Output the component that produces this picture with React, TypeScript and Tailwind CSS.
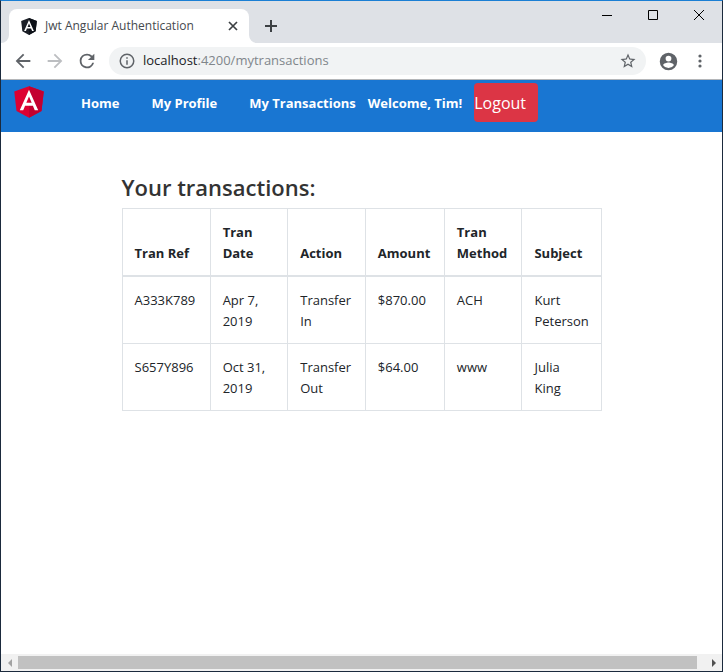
import type { ReactNode } from 'react';

type Transaction = {
  ref: string;
  date: string;
  action: string;
  amount: string;
  method: string;
  subject: string;
};

const transactions: Transaction[] = [
  { ref: 'A333K789', date: 'Apr 7, 2019', action: 'Transfer In', amount: '$870.00', method: 'ACH', subject: 'Kurt Peterson' },
  { ref: 'S657Y896', date: 'Oct 31, 2019', action: 'Transfer Out', amount: '$64.00', method: 'www', subject: 'Julia King' },
];

const headings = ['Tran Ref', 'Tran Date', 'Action', 'Amount', 'Tran Method', 'Subject'];

function AngularLogo({ className, left, right }: { className: string; left: string; right: string }) {
  return (
    <svg viewBox="31 29 188 202" className={className} aria-hidden="true">
      <path fill={left} d="M125 30 31.9 63.2l14.2 123.1L125 230l78.9-43.7 14.2-123.1z" />
      <path fill={right} d="M125 30v200l78.9-43.7 14.2-123.1z" />
      <path
        fill="#fff"
        d="M125 52.1 66.8 182.6h21.7l11.7-29.2h49.4l11.7 29.2H183L125 52.1zm17 83.3h-34l17-40.9z"
      />
    </svg>
  );
}

function IconButton({ label, className, children }: { label: string; className: string; children: ReactNode }) {
  return (
    <button type="button" aria-label={label} className={`flex shrink-0 items-center justify-center ${className}`}>
      {children}
    </button>
  );
}

function TabStrip() {
  return (
    <header className="flex h-[42px] bg-[#dee1e6]">
      <div className="flex w-2 items-end bg-[#dee1e6]">
        <svg viewBox="0 0 8 8" className="size-2" aria-hidden="true">
          <path fill="#fff" d="M0 8a8 8 0 0 0 8-8v8z" />
        </svg>
      </div>
      <div className="mt-2 flex w-60 items-center rounded-t-lg bg-white pr-2 pl-3">
        <AngularLogo className="h-[17px] w-4 shrink-0" left="#1b1f27" right="#0d1118" />
        <span className="ml-2 flex-1 text-[12px] whitespace-nowrap text-[#45494e]">Jwt Angular Authentication</span>
        <IconButton label="Close tab" className="size-4">
          <svg viewBox="0 0 16 16" className="size-4" aria-hidden="true">
            <path d="m4 4 8 8m0-8-8 8" stroke="#3c4043" strokeWidth="1.7" />
          </svg>
        </IconButton>
      </div>
      <svg viewBox="0 0 8 8" className="size-2 self-end" aria-hidden="true">
        <path fill="#fff" d="M8 8a8 8 0 0 1-8-8v8z" />
      </svg>
      <IconButton label="New tab" className="mt-[13px] ml-[2px] size-6">
        <svg viewBox="0 0 14 14" className="size-[14px]" aria-hidden="true">
          <path d="M7 1v12M1 7h12" stroke="#3c4043" strokeWidth="2" />
        </svg>
      </IconButton>
      <div className="ml-auto flex h-7 text-black">
        <IconButton label="Minimize" className="w-[46px]">
          <svg viewBox="0 0 12 12" className="size-3" aria-hidden="true">
            <path d="M1 6.5h10" stroke="currentColor" />
          </svg>
        </IconButton>
        <IconButton label="Maximize" className="w-[46px]">
          <svg viewBox="0 0 12 12" className="size-3" aria-hidden="true">
            <path d="M1.500 1.500h9v9h-9z" fill="none" stroke="currentColor" />
          </svg>
        </IconButton>
        <IconButton label="Close" className="w-[46px]">
          <svg viewBox="0 0 12 12" className="size-3" aria-hidden="true">
            <path d="m1 1 10 10m0-10L1 11" stroke="currentColor" />
          </svg>
        </IconButton>
      </div>
    </header>
  );
}

function Toolbar() {
  return (
    <div className="flex h-[37px] items-center border-b border-[#b4b6b9] bg-white">
      <IconButton label="Back" className="ml-[6px] size-8 text-[#5f6368]">
        <svg viewBox="0 0 24 24" className="size-[22px]" fill="currentColor" aria-hidden="true">
          <path d="M20 11H7.830l5.590-5.590L12 4l-8 8 8 8 1.410-1.410L7.830 13H20v-2z" />
        </svg>
      </IconButton>
      <IconButton label="Forward" className="size-8 text-[#bcbec1]">
        <svg viewBox="0 0 24 24" className="size-[22px]" fill="currentColor" aria-hidden="true">
          <path d="m12 4-1.410 1.410L16.170 11H4v2h12.170l-5.580 5.590L12 20l8-8z" />
        </svg>
      </IconButton>
      <IconButton label="Reload" className="size-8 text-[#5f6368]">
        <svg viewBox="0 0 24 24" className="size-[22px]" fill="currentColor" aria-hidden="true">
          <path d="M17.650 6.350A7.958 7.958 0 0 0 12 4a8 8 0 1 0 7.730 10h-2.080A6 6 0 1 1 12 6c1.660 0 3.140.690 4.220 1.780L13 11h7V4l-2.350 2.350z" />
        </svg>
      </IconButton>
      <div className="ml-[6px] flex h-7 flex-1 items-center rounded-full bg-[#f1f3f4] pr-[9px] pl-[9px]">
        <svg viewBox="0 0 24 24" className="size-[18px] shrink-0" fill="#5f6368" aria-hidden="true">
          <path d="M11 17h2v-6h-2v6zm0-8h2V7h-2v2zm1-7a10 10 0 1 0 0 20 10 10 0 0 0 0-20zm0 18a8 8 0 1 1 0-16 8 8 0 0 1 0 16z" />
        </svg>
        <a href="#mytransactions" className="ml-[7px] flex-1 text-[13px] text-[#80868b]">
          <span className="text-[#202124]">localhost</span>:4200/mytransactions
        </a>
        <IconButton label="Bookmark this page" className="size-[18px] text-[#5f6368]">
          <svg viewBox="0 0 24 24" className="size-[18px]" fill="currentColor" aria-hidden="true">
            <path d="m22 9.240-7.190-.620L12 2 9.190 8.630 2 9.240l5.460 4.730L5.820 21 12 17.270 18.180 21l-1.630-7.030L22 9.240zM12 15.400l-3.760 2.270 1-4.280-3.320-2.880 4.380-.380L12 6.100l1.710 4.040 4.380.380-3.320 2.880 1 4.280L12 15.400z" />
          </svg>
        </IconButton>
      </div>
      <IconButton label="Profile" className="ml-[6px] size-8 text-[#5f6368]">
        <svg viewBox="0 0 24 24" className="size-[21px]" fill="currentColor" aria-hidden="true">
          <path d="M12 2a10 10 0 1 0 0 20 10 10 0 0 0 0-20zm0 3.300a3.300 3.300 0 1 1 0 6.600 3.300 3.300 0 0 1 0-6.600zm0 14.200a7.200 7.200 0 0 1-6.100-3.300c.1-2 4.100-3.100 6.100-3.100s6 1.100 6.100 3.100a7.200 7.200 0 0 1-6.100 3.300z" />
        </svg>
      </IconButton>
      <IconButton label="Menu" className="mr-[6px] size-8 text-[#5f6368]">
        <svg viewBox="0 0 16 16" className="size-4" fill="currentColor" aria-hidden="true">
          <circle cx="8" cy="3" r="1.600" />
          <circle cx="8" cy="8" r="1.600" />
          <circle cx="8" cy="13" r="1.600" />
        </svg>
      </IconButton>
    </div>
  );
}

function NavBar() {
  return (
    <nav className="flex h-[52px] bg-[#1976d2] text-[13px] font-bold text-white">
      <AngularLogo className="mt-[6px] ml-3 h-8 w-8 shrink-0" left="#dd0031" right="#c3002f" />
      <div className="ml-5 flex h-12 items-center whitespace-nowrap">
        <a href="#home" className="px-4">Home</a>
        <a href="#profile" className="px-4">My Profile</a>
        <a href="#transactions" className="pr-1 pl-4">My Transactions</a>
        <span className="pr-3 pl-2">Welcome, Tim!</span>
      </div>
      <button type="button" className="mt-[3px] h-[39px] w-16 rounded-[4px] bg-[#dc3545] text-left text-[16px] font-normal">
        Logout
      </button>
    </nav>
  );
}

function TransactionsTable() {
  return (
    <table className="w-full table-fixed border-collapse text-left text-[13px] leading-[21px]">
      <colgroup>
        <col className="w-[18.400%]" />
        <col className="w-[16.200%]" />
        <col className="w-[16.200%]" />
        <col className="w-[16.500%]" />
        <col className="w-[16.200%]" />
        <col className="w-[16.500%]" />
      </colgroup>
      <thead>
        <tr>
          {headings.map((heading) => (
            <th key={heading} scope="col" className="border border-b-2 border-[#dee2e6] px-3 pt-[13px] pb-[11px] align-bottom font-bold">
              {heading}
            </th>
          ))}
        </tr>
      </thead>
      <tbody>
        {transactions.map((row) => (
          <tr key={row.ref}>
            {[row.ref, row.date, row.action, row.amount, row.method, row.subject].map((cell) => (
              <td key={cell} className="border border-[#dee2e6] px-3 pt-[13px] pb-[11px] align-top">
                {cell}
              </td>
            ))}
          </tr>
        ))}
      </tbody>
    </table>
  );
}

function ScrollBar() {
  return (
    <div className="flex h-[17px] items-center bg-[#f1f1f1]">
      <IconButton label="Scroll left" className="size-[17px]">
        <svg viewBox="0 0 8 8" className="size-2" aria-hidden="true">
          <path fill="#a3a3a3" d="M6 0v8L2 4z" />
        </svg>
      </IconButton>
      <div className="h-[13px] flex-1 bg-[#c1c1c1]" />
      <IconButton label="Scroll right" className="ml-2 size-[17px]">
        <svg viewBox="0 0 8 8" className="size-2" aria-hidden="true">
          <path fill="#505050" d="M2 0v8l4-4z" />
        </svg>
      </IconButton>
    </div>
  );
}

export default function App() {
  return (
    <div className="flex min-h-screen flex-col border border-[#1b2a3d] border-t-[#1b7fd4] bg-white font-['Open_Sans','Noto_Sans',sans-serif] text-[#212529]">
      <TabStrip />
      <Toolbar />
      <NavBar />
      <main className="mx-auto w-2/3 max-w-[480px] flex-1 pt-10">
        <h1 className="mb-[6px] text-[22px] leading-[30px] font-semibold text-[#333]">Your transactions:</h1>
        <TransactionsTable />
      </main>
      <ScrollBar />
    </div>
  );
}
